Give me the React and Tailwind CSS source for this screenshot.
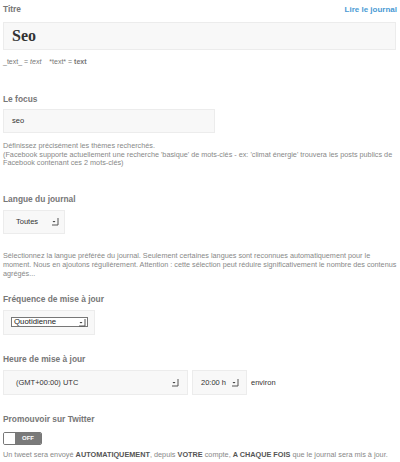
import React from "react";

function Arrow() {
  return (
    <svg width="8" height="9" viewBox="0 0 8 9" className="shrink-0">
      <path d="M1.5 4 L4.5 4 L3 5.6 Z" fill="#333" />
      <path d="M7 1 L7 8 L1 8" stroke="#555" strokeWidth="1" fill="none" />
    </svg>
  );
}

export default function App() {
  return (
    <div
      className="w-[400px] h-[462px] bg-white overflow-hidden pl-[3px] pr-[3px] pt-[5px]"
      style={{ fontFamily: "'Liberation Sans', Arial, sans-serif" }}
    >
      <div className="flex justify-between items-center h-[9px]">
        <span className="text-[8.4px] font-bold text-[#777]">Titre</span>
        <span className="text-[8px] font-bold text-[#4a9ad4]">Lire le journal</span>
      </div>
      <div className="mt-[8px] h-[28px] mr-[1px] bg-[#f8f8f8] border border-[#ececec] flex items-center pl-[8px]">
        <span
          className="text-[16px] font-bold text-[#333]"
          style={{ fontFamily: "'Liberation Serif', 'Times New Roman', serif" }}
        >
          Seo
        </span>
      </div>
      <div className="mt-[8px] h-[8px] leading-[8px] text-[7px] text-[#777]">
        _text_ = <i>text</i>
        <span className="ml-[8px]">*text* = <b>text</b></span>
      </div>

      <div className="mt-[29px] h-[9px] leading-[9px] text-[8.4px] font-bold text-[#777]">Le focus</div>
      <div className="mt-[5px] h-[24px] w-[212px] bg-[#f8f8f8] border border-[#ececec] flex items-center pl-[8px]">
        <span className="text-[7.5px] text-[#333]">seo</span>
      </div>
      <div className="mt-[9px] text-[7.25px] leading-[8.7px] text-[#888]">
        Définissez précisément les thèmes recherchés.
        <br />
        (Facebook supporte actuellement une recherche 'basique' de mots-clés - ex: 'climat énergie' trouvera les posts publics de Facebook contenant ces 2 mots-clés)
      </div>

      <div className="mt-[27px] h-[9px] leading-[9px] text-[8.4px] font-bold text-[#777]">Langue du journal</div>
      <div className="mt-[5.5px] h-[24px] w-[62px] bg-[#f8f8f8] border border-[#ececec] flex items-center pl-[12px] gap-[13px]">
        <span className="text-[7.5px] text-[#333]">Toutes</span>
        <Arrow />
      </div>
      <div className="mt-[18.5px] text-[7.25px] leading-[8.7px] text-[#888]">
        Sélectionnez la langue préférée du journal. Seulement certaines langues sont reconnues automatiquement pour le
        <br />
        moment. Nous en ajoutons régulièrement. Attention : cette sélection peut réduire significativement le nombre des contenus agrégés...
      </div>

      <div className="mt-[17px] h-[9px] leading-[9px] text-[8.4px] font-bold text-[#777]">Fréquence de mise à jour</div>
      <div className="mt-[5.5px] h-[25px] w-[92px] bg-[#f8f8f8] border border-[#ececec] flex items-center pl-[7px]">
        <div className="w-[77px] h-[10px] border border-[#777] bg-white flex items-center justify-between pl-[2px] pr-[1px]">
          <span className="text-[7.8px] leading-[8px] text-[#222]">Quotidienne</span>
          <Arrow />
        </div>
      </div>

      <div className="mt-[20.5px] h-[9px] leading-[9px] text-[8.4px] font-bold text-[#777]">Heure de mise à jour</div>
      <div className="mt-[5.5px] flex items-center gap-[4px]">
        <div className="h-[25px] w-[185px] bg-[#f8f8f8] border border-[#ececec] flex items-center justify-between pl-[12px] pr-[8px]">
          <span className="text-[7.5px] text-[#333]">(GMT+00:00) UTC</span>
          <Arrow />
        </div>
        <div className="h-[25px] w-[55px] bg-[#f8f8f8] border border-[#ececec] flex items-center pl-[8px] gap-[5px]">
          <span className="text-[7.5px] text-[#333]">20:00 h</span>
          <Arrow />
        </div>
        <span className="text-[7.5px] text-[#333]">environ</span>
      </div>

      <div className="mt-[20.5px] h-[9px] leading-[9px] text-[8.4px] font-bold text-[#777]">Promouvoir sur Twitter</div>
      <div className="mt-[7.5px] h-[13px] w-[39px] flex rounded-[2px] overflow-hidden border border-[#777]">
        <div className="w-[11px] bg-white" />
        <div className="flex-1 bg-[#7a7a7a] flex items-center justify-center">
          <span className="text-[6px] font-bold text-white">OFF</span>
        </div>
      </div>
      <div className="mt-[6px] h-[8px] leading-[8px] text-[7.3px] text-[#888] whitespace-nowrap">
        Un tweet sera envoyé <b className="text-[#555]">AUTOMATIQUEMENT</b>, depuis <b className="text-[#555]">VOTRE</b> compte, <b className="text-[#555]">A CHAQUE FOIS</b> que le journal sera mis à jour.
      </div>
    </div>
  );
}
